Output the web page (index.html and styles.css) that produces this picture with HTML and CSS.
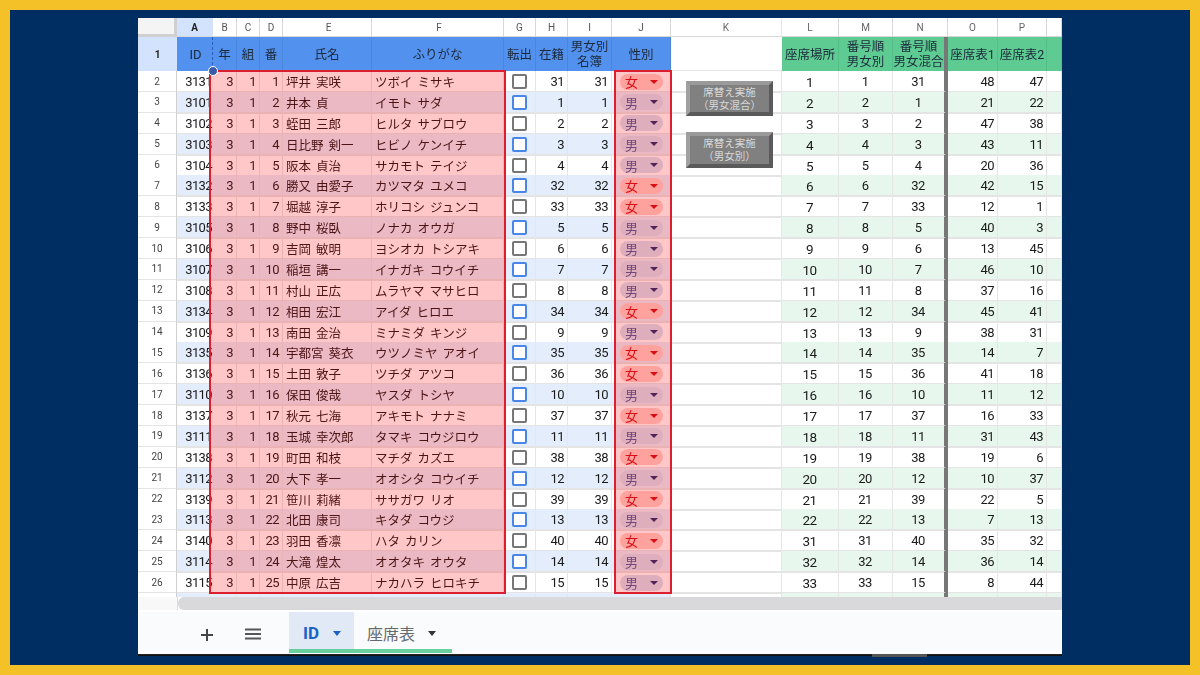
FILE: index.html
```html
<!DOCTYPE html>
<html lang="ja">
<head>
<meta charset="utf-8">
<title>ID</title>
<link rel="stylesheet" href="styles.css">
</head>
<body>
<div class="frame">
<div class="screen">
<div class="grid">
<div class="r letters"><span></span><span class="sel">A</span><span>B</span><span>C</span><span>D</span><span>E</span><span>F</span><span>G</span><span>H</span><span>I</span><span>J</span><span>K</span><span>L</span><span>M</span><span>N</span><span>O</span><span>P</span><span></span></div>
<div class="r head"><span class="rh sel">1</span><span>ID</span><span>年</span><span>組</span><span>番</span><span>氏名</span><span>ふりがな</span><span>転出</span><span>在籍</span><span>男女別<br>名簿</span><span>性別</span><span></span><span>座席場所</span><span>番号順<br>男女別</span><span>番号順<br>男女混合</span><span>座席表1</span><span>座席表2</span><span></span></div>
<div class="r"><span>2</span><span>3131</span><span>3</span><span>1</span><span>1</span><span>坪井 実咲</span><span>ツボイ ミサキ</span><span><i class="cb"></i></span><span>31</span><span>31</span><span><b class="chip f">女</b></span><span></span><span>1</span><span>1</span><span>31</span><span>48</span><span>47</span><span></span></div>
<div class="r b"><span>3</span><span>3101</span><span>3</span><span>1</span><span>2</span><span>井本 貞</span><span>イモト サダ</span><span><i class="cb"></i></span><span>1</span><span>1</span><span><b class="chip m">男</b></span><span></span><span>2</span><span>2</span><span>1</span><span>21</span><span>22</span><span></span></div>
<div class="r"><span>4</span><span>3102</span><span>3</span><span>1</span><span>3</span><span>蛭田 三郎</span><span>ヒルタ サブロウ</span><span><i class="cb"></i></span><span>2</span><span>2</span><span><b class="chip m">男</b></span><span></span><span>3</span><span>3</span><span>2</span><span>47</span><span>38</span><span></span></div>
<div class="r b"><span>5</span><span>3103</span><span>3</span><span>1</span><span>4</span><span>日比野 剣一</span><span>ヒビノ ケンイチ</span><span><i class="cb"></i></span><span>3</span><span>3</span><span><b class="chip m">男</b></span><span></span><span>4</span><span>4</span><span>3</span><span>43</span><span>11</span><span></span></div>
<div class="r"><span>6</span><span>3104</span><span>3</span><span>1</span><span>5</span><span>阪本 貞治</span><span>サカモト テイジ</span><span><i class="cb"></i></span><span>4</span><span>4</span><span><b class="chip m">男</b></span><span></span><span>5</span><span>5</span><span>4</span><span>20</span><span>36</span><span></span></div>
<div class="r b"><span>7</span><span>3132</span><span>3</span><span>1</span><span>6</span><span>勝又 由愛子</span><span>カツマタ ユメコ</span><span><i class="cb"></i></span><span>32</span><span>32</span><span><b class="chip f">女</b></span><span></span><span>6</span><span>6</span><span>32</span><span>42</span><span>15</span><span></span></div>
<div class="r"><span>8</span><span>3133</span><span>3</span><span>1</span><span>7</span><span>堀越 淳子</span><span>ホリコシ ジュンコ</span><span><i class="cb"></i></span><span>33</span><span>33</span><span><b class="chip f">女</b></span><span></span><span>7</span><span>7</span><span>33</span><span>12</span><span>1</span><span></span></div>
<div class="r b"><span>9</span><span>3105</span><span>3</span><span>1</span><span>8</span><span>野中 桜臥</span><span>ノナカ オウガ</span><span><i class="cb"></i></span><span>5</span><span>5</span><span><b class="chip m">男</b></span><span></span><span>8</span><span>8</span><span>5</span><span>40</span><span>3</span><span></span></div>
<div class="r"><span>10</span><span>3106</span><span>3</span><span>1</span><span>9</span><span>吉岡 敏明</span><span>ヨシオカ トシアキ</span><span><i class="cb"></i></span><span>6</span><span>6</span><span><b class="chip m">男</b></span><span></span><span>9</span><span>9</span><span>6</span><span>13</span><span>45</span><span></span></div>
<div class="r b"><span>11</span><span>3107</span><span>3</span><span>1</span><span>10</span><span>稲垣 講一</span><span>イナガキ コウイチ</span><span><i class="cb"></i></span><span>7</span><span>7</span><span><b class="chip m">男</b></span><span></span><span>10</span><span>10</span><span>7</span><span>46</span><span>10</span><span></span></div>
<div class="r"><span>12</span><span>3108</span><span>3</span><span>1</span><span>11</span><span>村山 正広</span><span>ムラヤマ マサヒロ</span><span><i class="cb"></i></span><span>8</span><span>8</span><span><b class="chip m">男</b></span><span></span><span>11</span><span>11</span><span>8</span><span>37</span><span>16</span><span></span></div>
<div class="r b"><span>13</span><span>3134</span><span>3</span><span>1</span><span>12</span><span>相田 宏江</span><span>アイダ ヒロエ</span><span><i class="cb"></i></span><span>34</span><span>34</span><span><b class="chip f">女</b></span><span></span><span>12</span><span>12</span><span>34</span><span>45</span><span>41</span><span></span></div>
<div class="r"><span>14</span><span>3109</span><span>3</span><span>1</span><span>13</span><span>南田 金治</span><span>ミナミダ キンジ</span><span><i class="cb"></i></span><span>9</span><span>9</span><span><b class="chip m">男</b></span><span></span><span>13</span><span>13</span><span>9</span><span>38</span><span>31</span><span></span></div>
<div class="r b"><span>15</span><span>3135</span><span>3</span><span>1</span><span>14</span><span>宇都宮 葵衣</span><span>ウツノミヤ アオイ</span><span><i class="cb"></i></span><span>35</span><span>35</span><span><b class="chip f">女</b></span><span></span><span>14</span><span>14</span><span>35</span><span>14</span><span>7</span><span></span></div>
<div class="r"><span>16</span><span>3136</span><span>3</span><span>1</span><span>15</span><span>土田 敦子</span><span>ツチダ アツコ</span><span><i class="cb"></i></span><span>36</span><span>36</span><span><b class="chip f">女</b></span><span></span><span>15</span><span>15</span><span>36</span><span>41</span><span>18</span><span></span></div>
<div class="r b"><span>17</span><span>3110</span><span>3</span><span>1</span><span>16</span><span>保田 俊哉</span><span>ヤスダ トシヤ</span><span><i class="cb"></i></span><span>10</span><span>10</span><span><b class="chip m">男</b></span><span></span><span>16</span><span>16</span><span>10</span><span>11</span><span>12</span><span></span></div>
<div class="r"><span>18</span><span>3137</span><span>3</span><span>1</span><span>17</span><span>秋元 七海</span><span>アキモト ナナミ</span><span><i class="cb"></i></span><span>37</span><span>37</span><span><b class="chip f">女</b></span><span></span><span>17</span><span>17</span><span>37</span><span>16</span><span>33</span><span></span></div>
<div class="r b"><span>19</span><span>3111</span><span>3</span><span>1</span><span>18</span><span>玉城 幸次郎</span><span>タマキ コウジロウ</span><span><i class="cb"></i></span><span>11</span><span>11</span><span><b class="chip m">男</b></span><span></span><span>18</span><span>18</span><span>11</span><span>31</span><span>43</span><span></span></div>
<div class="r"><span>20</span><span>3138</span><span>3</span><span>1</span><span>19</span><span>町田 和枝</span><span>マチダ カズエ</span><span><i class="cb"></i></span><span>38</span><span>38</span><span><b class="chip f">女</b></span><span></span><span>19</span><span>19</span><span>38</span><span>19</span><span>6</span><span></span></div>
<div class="r b"><span>21</span><span>3112</span><span>3</span><span>1</span><span>20</span><span>大下 孝一</span><span>オオシタ コウイチ</span><span><i class="cb"></i></span><span>12</span><span>12</span><span><b class="chip m">男</b></span><span></span><span>20</span><span>20</span><span>12</span><span>10</span><span>37</span><span></span></div>
<div class="r"><span>22</span><span>3139</span><span>3</span><span>1</span><span>21</span><span>笹川 莉緒</span><span>ササガワ リオ</span><span><i class="cb"></i></span><span>39</span><span>39</span><span><b class="chip f">女</b></span><span></span><span>21</span><span>21</span><span>39</span><span>22</span><span>5</span><span></span></div>
<div class="r b"><span>23</span><span>3113</span><span>3</span><span>1</span><span>22</span><span>北田 康司</span><span>キタダ コウジ</span><span><i class="cb"></i></span><span>13</span><span>13</span><span><b class="chip m">男</b></span><span></span><span>22</span><span>22</span><span>13</span><span>7</span><span>13</span><span></span></div>
<div class="r"><span>24</span><span>3140</span><span>3</span><span>1</span><span>23</span><span>羽田 香凛</span><span>ハタ カリン</span><span><i class="cb"></i></span><span>40</span><span>40</span><span><b class="chip f">女</b></span><span></span><span>31</span><span>31</span><span>40</span><span>35</span><span>32</span><span></span></div>
<div class="r b"><span>25</span><span>3114</span><span>3</span><span>1</span><span>24</span><span>大滝 煌太</span><span>オオタキ オウタ</span><span><i class="cb"></i></span><span>14</span><span>14</span><span><b class="chip m">男</b></span><span></span><span>32</span><span>32</span><span>14</span><span>36</span><span>14</span><span></span></div>
<div class="r"><span>26</span><span>3115</span><span>3</span><span>1</span><span>25</span><span>中原 広吉</span><span>ナカハラ ヒロキチ</span><span><i class="cb"></i></span><span>15</span><span>15</span><span><b class="chip m">男</b></span><span></span><span>33</span><span>33</span><span>15</span><span>8</span><span>44</span><span></span></div>
<div class="r b stub"><span></span><span></span><span></span><span></span><span></span><span></span><span></span><span></span><span></span><span></span><span></span><span></span><span></span><span></span><span></span><span></span><span></span><span></span></div>
<div class="overlay ov-main"></div>
<div class="overlay ov-sex"></div>
<div class="dash"></div>
<div class="handle"></div>
<div class="btn btn1">席替え実施<br>（男女混合）</div>
<div class="btn btn2">席替え実施<br>（男女別）</div>
</div>
<div class="scroll"><div class="corner"></div><div class="thumb"></div></div>
<div class="tabs">
<svg class="plus" width="14" height="14" viewBox="0 0 14 14"><path d="M7 1v12M1 7h12" stroke="#444" stroke-width="2" fill="none"/></svg>
<svg class="menu" width="16" height="12" viewBox="0 0 16 12"><path d="M0 1.5h16M0 6h16M0 10.5h16" stroke="#555" stroke-width="2" fill="none"/></svg>
<div class="tab on">ID<em class="arrow"></em></div>
<div class="tab">座席表<em class="arrow"></em></div>
</div>
<div class="notch"></div>
</div>
</div>
</body>
</html>
```
FILE: styles.css
```css
* { box-sizing: border-box; }
html, body { margin: 0; height: 100%; }
body { width: 1200px; height: 675px; padding: 10px; background: #f4c228; overflow: hidden; font-family: Roboto, "Noto Sans CJK JP", sans-serif; }
.frame { width: 1180px; height: 655px; padding: 8px 128px 10px; background: #002d62; }
.screen { position: relative; width: 924px; height: 637px; background: #fff; display: flex; flex-direction: column; box-shadow: 0 1px 0 #111; filter: blur(0.35px); }
.grid { position: relative; height: 579px; }

.r { display: grid; grid-template-columns: 39px 36px 24px 23px 23px 89px 132px 32px 32px 44px 59px 111px 57px 54px 55px 50px 49px 15px; height: 20.88px; font-size: 13px; letter-spacing: -0.6px; color: #1a1a1a; }
.r > span { display: flex; align-items: center; justify-content: flex-end; padding: 1px 3px 0 2px; border-right: 1px solid #e6e6e6; border-bottom: 2px solid #e4e4e4; white-space: nowrap; min-width: 0; }
.r > span:nth-child(1) { justify-content: center; padding: 0; font-size: 10px; letter-spacing: 0; color: #444; background: #fff; border-right: 1px solid #d0d0d0; }
.r > span:nth-child(2) { padding-right: 1px; border-right: 0; }
.r > span:nth-child(6), .r > span:nth-child(7) { justify-content: flex-start; font-size: 12.5px; letter-spacing: 0; word-spacing: 2px; padding-left: 3px; }
.r > span:nth-child(8), .r > span:nth-child(11) { justify-content: center; }
.r > span:nth-child(11) { justify-content: flex-start; padding-left: 8px; }
.r > span:nth-child(12) { border-right: 1px solid #e6e6e6; }
.r > span:nth-child(13), .r > span:nth-child(14), .r > span:nth-child(15) { justify-content: center; }
.r > span:nth-child(15) { border-right: 4px solid #777; padding-left: 2px; }
.r > span:nth-child(13) { font-size: 13.5px; padding-top: 2px; }

.b > span:nth-child(n+2):nth-child(-n+11) { background: #e4edfc; }
.b > span:nth-child(n+13) { background: #e8f7ee; }
.b > span:nth-child(2) { background: #e8f0fe; }

.letters { height: 19px; font-size: 10px; letter-spacing: 0; color: #555; }
.letters > span { justify-content: center; padding: 0; background: #fff; border-bottom: 1px solid #d8d8d8; border-right: 1px solid #d8d8d8; }
.letters > span.sel { background: #d3e3fd; color: #222; font-weight: 700; }
.letters > span:nth-child(1) { background: #f4f4f4; border-right: 3px solid #d0d0d0; border-bottom: 3px solid #d0d0d0; }
.letters > span:nth-child(15) { padding-left: 0; border-right: 1px solid #d8d8d8; }
.letters > span:nth-child(6), .letters > span:nth-child(7) { justify-content: center; font-size: 10px; }
.letters > span:nth-child(8), .letters > span:nth-child(11), .letters > span:nth-child(13) { justify-content: center; padding: 0; font-size: 10px; }
.letters > span:nth-child(n+12) { color: #666; }

.head { height: 34px; line-height: 15px; font-size: 12.5px; letter-spacing: 0; color: #1d2a3a; text-align: center; }
.head > span { justify-content: center; padding: 0; background: #5391ee; border-right: 1px solid #4a86dc; border-bottom: 0; }
.head > span.sel { background: #d3e3fd; color: #222; font-weight: 700; border-right: 0; }
.head > span:nth-child(2) { font-size: 13px; padding-left: 2px; }
.head > span:nth-child(6), .head > span:nth-child(7) { justify-content: center; padding: 0; }
.head > span:nth-child(8), .head > span:nth-child(11) { justify-content: center; padding: 0; }
.head > span:nth-child(12) { background: #fff; border-right: 0; border-bottom: 1px solid #e4e4e4; }
.head > span:nth-child(n+13) { background: #5ecb93; border-right: 1px solid #55bd88; padding: 0; font-size: 12.5px; }
.head > span:nth-child(15) { border-right: 4px solid #777; }

.stub { height: 4px; }
.stub > span { padding: 0; border-bottom: 0; }

.cb { display: block; width: 15px; height: 15px; border: 2px solid #777; border-radius: 2px; background: #fff; }
.b .cb { border-color: #4a86e8; }
.chip { position: relative; display: flex; align-items: center; width: 43px; height: 16px; padding-left: 5px; border-radius: 8px; font-weight: 400; font-size: 13px; letter-spacing: 0; }
.chip.f { background: #ffcfc9; color: #d0101a; }
.chip.m { background: #d6dff1; color: #4c5c9c; }
.chip::after { content: ""; position: absolute; right: 5px; top: 6px; border: 4px solid transparent; border-top: 4px solid #1f2f70; border-bottom: 0; }
.chip.f::after { border-top-color: #d0101a; }

.overlay { position: absolute; top: 52px; height: 524px; border: 2px solid #dc1f2e; background: rgba(255, 0, 0, 0.22); }
.ov-main { left: 71px; width: 297px; }
.ov-sex { left: 476px; width: 58px; }
.dash { position: absolute; left: 74px; top: 19px; height: 33px; border-left: 1px dashed #2a5fc0; }
.handle { position: absolute; left: 70px; top: 48px; width: 10px; height: 10px; border-radius: 50%; background: #3a5ba8; border: 1px solid #fff; }

.btn { position: absolute; left: 548px; width: 87px; height: 35px; display: flex; align-items: center; justify-content: center; text-align: center; font-size: 10.5px; line-height: 13px; color: #d8d8d8; background: #808080; border: 4px solid; border-color: #9a9a9a #5a5a5a #5a5a5a #a0a0a0; }
.btn1 { top: 63px; }
.btn2 { top: 114px; height: 36px; }

.scroll { display: flex; height: 15px; padding-bottom: 2px; background: #fff; }
.corner { width: 40px; background: #f8f8f8; border-right: 1px solid #ddd; }
.thumb { flex: 1; background: #d9d9db; border-radius: 6px 0 0 6px; }

.tabs { display: flex; align-items: flex-start; height: 43px; padding-left: 62px; background: #fafbfc; border-bottom: 1px solid #222; }
.plus { margin-top: 16px; }
.menu { margin: 16px 28px 0 31px; }
.tab { display: flex; align-items: center; height: 41px; padding: 5px 13px 0; font-size: 16px; color: #666a6e; border-bottom: 4px solid #69cf9c; }
.tab.on { width: 65px; padding-left: 14px; font-weight: 700; font-size: 17px; color: #1a62c8; background: #e1e9f7; }
.tab:not(.on) { width: 98px; }
.arrow { margin-left: 13px; border: 4px solid transparent; border-top: 5px solid #333; border-bottom: 0; }
.on .arrow { border-top-color: #1a62c8; margin-left: 14px; }
.notch { position: absolute; left: 734px; top: 636px; width: 55px; height: 3px; background: #555; }
```
